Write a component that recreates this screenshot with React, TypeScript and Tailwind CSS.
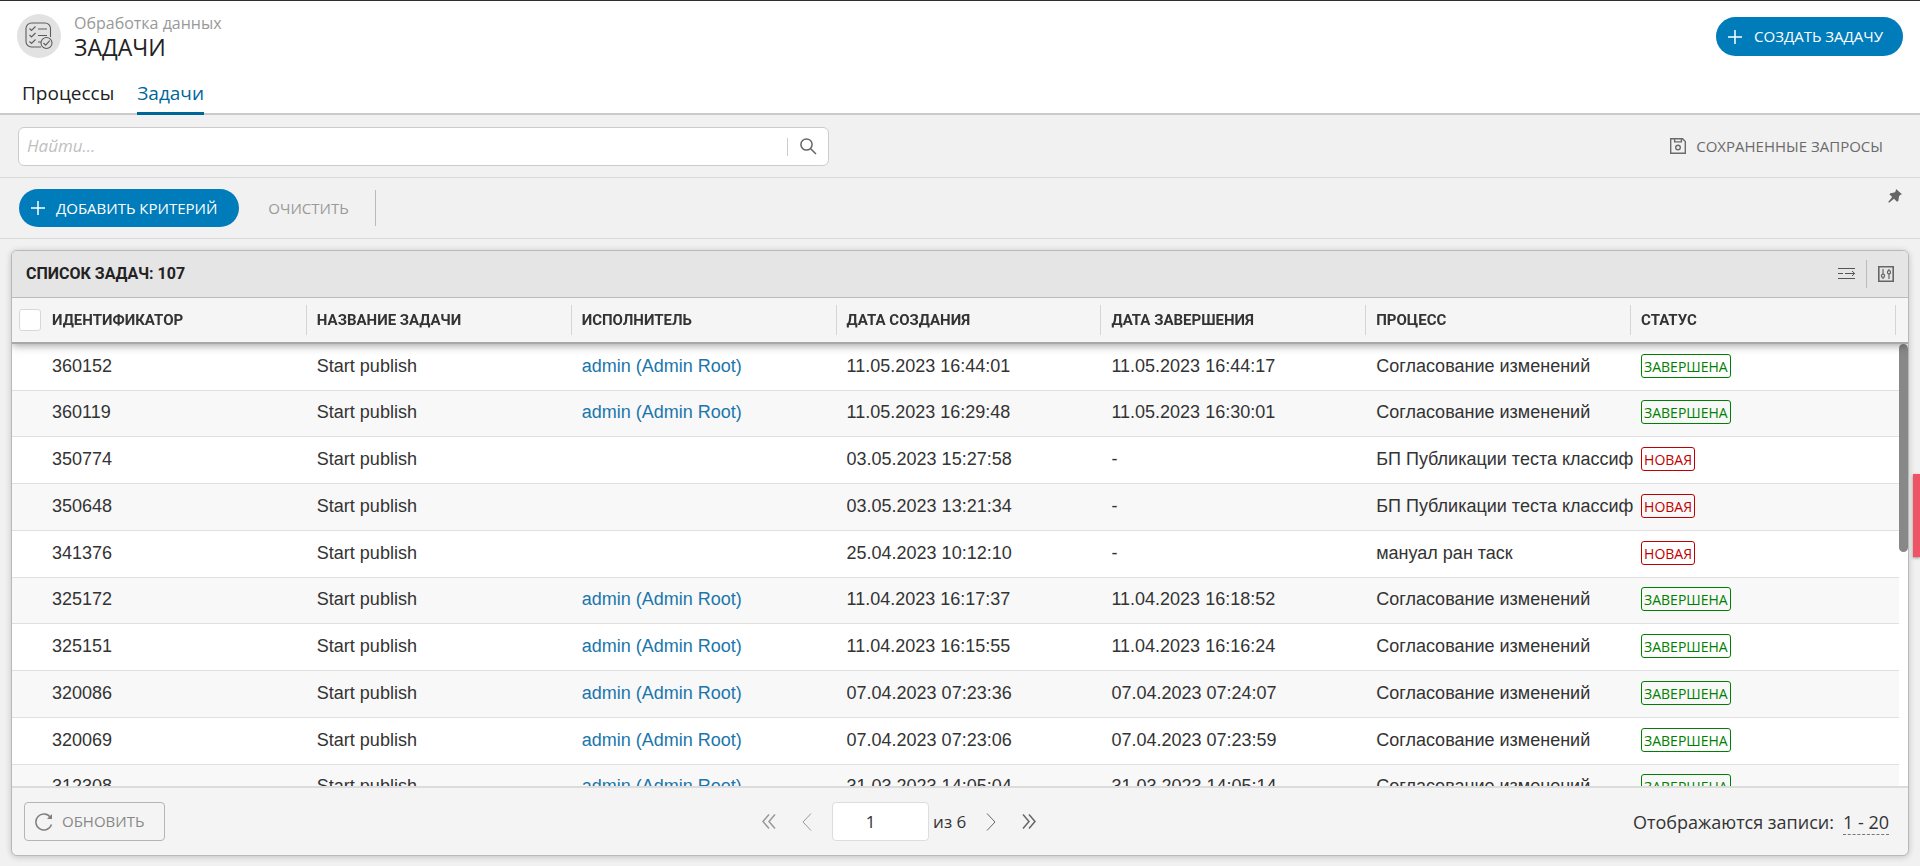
import React, { useState } from 'react';

interface Task {
  id: string;
  name: string;
  assignee?: string;
  created: string;
  finished?: string;
  process: string;
  status: 'done' | 'new';
}

const APPROVAL = 'Согласование изменений';
const PUBLISH = 'БП Публикации теста классификатора';
const ADMIN = 'admin (Admin Root)';

const tasks: Task[] = [
  { id: '360152', name: 'Start publish', assignee: ADMIN, created: '11.05.2023 16:44:01', finished: '11.05.2023 16:44:17', process: APPROVAL, status: 'done' },
  { id: '360119', name: 'Start publish', assignee: ADMIN, created: '11.05.2023 16:29:48', finished: '11.05.2023 16:30:01', process: APPROVAL, status: 'done' },
  { id: '350774', name: 'Start publish', created: '03.05.2023 15:27:58', process: PUBLISH, status: 'new' },
  { id: '350648', name: 'Start publish', created: '03.05.2023 13:21:34', process: PUBLISH, status: 'new' },
  { id: '341376', name: 'Start publish', created: '25.04.2023 10:12:10', process: 'мануал ран таск', status: 'new' },
  { id: '325172', name: 'Start publish', assignee: ADMIN, created: '11.04.2023 16:17:37', finished: '11.04.2023 16:18:52', process: APPROVAL, status: 'done' },
  { id: '325151', name: 'Start publish', assignee: ADMIN, created: '11.04.2023 16:15:55', finished: '11.04.2023 16:16:24', process: APPROVAL, status: 'done' },
  { id: '320086', name: 'Start publish', assignee: ADMIN, created: '07.04.2023 07:23:36', finished: '07.04.2023 07:24:07', process: APPROVAL, status: 'done' },
  { id: '320069', name: 'Start publish', assignee: ADMIN, created: '07.04.2023 07:23:06', finished: '07.04.2023 07:23:59', process: APPROVAL, status: 'done' },
  { id: '312308', name: 'Start publish', assignee: ADMIN, created: '31.03.2023 14:05:04', finished: '31.03.2023 14:05:14', process: APPROVAL, status: 'done' },
];

const columns = ['ИДЕНТИФИКАТОР', 'НАЗВАНИЕ ЗАДАЧИ', 'ИСПОЛНИТЕЛЬ', 'ДАТА СОЗДАНИЯ', 'ДАТА ЗАВЕРШЕНИЯ', 'ПРОЦЕСС', 'СТАТУС'];

const PlusIcon = () => (
  <svg width="14" height="14" viewBox="0 0 14 14" stroke="currentColor" strokeWidth="1.5" aria-hidden="true">
    <path d="M7 0v14M0 7h14" />
  </svg>
);

const TasksIcon = () => (
  <svg width="28" height="28" viewBox="0 0 28 28" fill="none" stroke="#5c5c5c" strokeWidth="1.1" aria-hidden="true">
    <path d="M16 25H6.500a5.500 5.500 0 0 1-5.500-5.500V6.500A5.500 5.500 0 0 1 6.500 1h13A5.500 5.500 0 0 1 25.500 6.500V15" />
    <path d="M4.500 6.500l2 2 4-4M4.500 13l2 2 4-4M4.500 19.500l2 2 4-4" />
    <path d="M13 7h9M13 13.500h9M13 20h3" />
    <circle cx="21.500" cy="21" r="5.500" fill="#e2e2e2" />
    <path d="M18.500 21l2.200 2.200 4-4.500" />
  </svg>
);

const SearchIcon = () => (
  <svg width="17" height="17" viewBox="0 0 17 17" fill="none" stroke="#666" strokeWidth="1.500" aria-hidden="true">
    <circle cx="6.500" cy="6.500" r="5.600" />
    <path d="M10.500 10.500l5.500 5.500" />
  </svg>
);

const DiskIcon = () => (
  <svg width="16" height="16" viewBox="0 0 16 16" fill="none" stroke="#6b6b6b" strokeWidth="1.400" aria-hidden="true">
    <path d="M.7.700h11.800l2.800 2.800v11.800H.7z" />
    <path d="M4.600.700v3.200h6.800V.7" />
    <circle cx="8" cy="9.500" r="2.300" />
  </svg>
);

const PinIcon = () => (
  <svg width="14" height="14" viewBox="0 0 14 14" fill="#666" aria-hidden="true">
    <path d="M8 0l6 5.300-2 .7-1 1.500-.7 4.500-1.300.800-3-3L1 13.800l-.8-.700L4.200 8 1.500 5.500l.8-1.300L6.500 3.500 7.800 2z" />
  </svg>
);

const WrapIcon = () => (
  <svg width="18" height="12" viewBox="0 0 18 12" fill="none" stroke="#555" strokeWidth="1" aria-hidden="true">
    <path d="M0 .5h17M0 10.500h17M0 5.500h5M7 5.500h9.500M14 3l2.700 2.500L14 8" />
  </svg>
);

const SettingsIcon = () => (
  <svg width="16" height="16" viewBox="0 0 16 16" fill="none" stroke="#666" strokeWidth="1.200" aria-hidden="true">
    <path d="M.8.800h14.400v14.400H.8z" strokeWidth="1.600" />
    <path d="M5 3v5M5 11.500V13M11 3v1.500M11 8v5" />
    <circle cx="5" cy="9.800" r="1.600" />
    <circle cx="11" cy="6.200" r="1.600" />
  </svg>
);

const RefreshIcon = () => (
  <svg width="18" height="18" viewBox="0 0 18 18" fill="none" stroke="#808080" strokeWidth="1.500" aria-hidden="true">
    <path d="M16.500 11.500A8 8 0 1 1 15.500 4.500" />
    <path d="M17 1v5h-5z" fill="#808080" stroke="none" />
  </svg>
);

const StatusBadge: React.FC<{ status: Task['status'] }> = ({ status }) => (
  <span
    className={`h-6 rounded-[3px] border px-[2px] font-['Open_Sans',sans-serif] text-sm leading-[23px] ${
      status === 'done' ? 'border-[#008000] text-[#008000]' : 'border-[#c00000] text-[#c00000]'
    }`}
  >
    {status === 'done' ? 'ЗАВЕРШЕНА' : 'НОВАЯ'}
  </span>
);

const Cell: React.FC<{ children?: React.ReactNode }> = ({ children }) => (
  <td className="border-b border-[#e0e0e0] py-0 pl-[10px]">
    <div className="-mr-[3px] overflow-hidden pb-[3px] whitespace-nowrap">{children}</div>
  </td>
);

const PageHeader = () => (
  <header className="border-t border-[#2d2d33] bg-white">
    <div className="flex items-start justify-between px-[17px] pt-[10px]">
      <div className="flex items-center gap-[13px]">
        <div className="flex h-11 w-11 items-center justify-center rounded-full bg-[#e2e2e2]">
          <TasksIcon />
        </div>
        <div className="pt-[2px]">
          <p className="text-base leading-5 text-[#999]">Обработка данных</p>
          <h1 className="text-[23px] leading-7 text-[#222]">ЗАДАЧИ</h1>
        </div>
      </div>
      <button
        type="button"
        className="mt-[6px] flex h-[39px] items-center gap-3 rounded-full bg-[#007cba] pr-5 pl-3 text-[15px] text-white"
      >
        <PlusIcon />
        СОЗДАТЬ ЗАДАЧУ
      </button>
    </div>
    <nav className="flex gap-[23px] border-b-2 border-[#c9cbcb] px-[22px] text-[19px]">
      <a href="#processes" className="-mb-[2px] h-[54px] border-b-[3px] border-transparent pt-4 leading-8 text-[#222]">Процессы</a>
      <a href="#tasks" className="-mb-[2px] h-[54px] border-b-[3px] border-[#006699] pt-4 leading-8 text-[#006699]">Задачи</a>
    </nav>
  </header>
);

const SearchBar = () => {
  const [query, setQuery] = useState('');

  return (
    <div className="flex items-center justify-between border-b border-[#d8d8d8] pt-3 pr-[37px] pb-[11px] pl-[18px]">
      <div className="flex h-[39px] w-[811px] items-center rounded-md border border-[#ccc] bg-white">
        <input
          type="text"
          aria-label="Поиск"
          placeholder="Найти..."
          className="h-full flex-1 bg-transparent px-2 pb-[2px] text-[17px] outline-none placeholder:text-[#c0c0c0] placeholder:italic"
          value={query}
          onChange={(e) => setQuery(e.target.value)}
        />
        <button type="button" aria-label="Найти" className="flex h-[18px] items-center border-l border-[#ccc] pr-[11px] pl-3">
          <SearchIcon />
        </button>
      </div>
      <button type="button" className="flex items-center gap-[10px] pb-px text-[15px] text-[#6b6b6b]">
        <DiskIcon />
        СОХРАНЕННЫЕ ЗАПРОСЫ
      </button>
    </div>
  );
};

const CriteriaBar = () => (
  <div className="flex items-start justify-between border-b border-[#d8d8d8] px-[19px] pt-[11px] pb-[11px]">
    <div className="flex items-center">
      <button type="button" className="flex h-[38px] items-center gap-[11px] rounded-full bg-[#007cba] pr-[22px] pl-3 text-[15px] text-white">
        <PlusIcon />
        ДОБАВИТЬ КРИТЕРИЙ
      </button>
      <button type="button" className="ml-[29px] text-[15px] text-[#999]">ОЧИСТИТЬ</button>
      <span className="ml-[26px] h-9 border-l border-[#bbb]" />
    </div>
    <button type="button" aria-label="Закрепить" className="-mr-px">
      <PinIcon />
    </button>
  </div>
);

const TaskTable = () => (
  <div className="relative min-h-0 flex-1">
    <div className="h-full overflow-y-auto bg-white [scrollbar-width:none]">
      <table className="w-full table-fixed border-separate border-spacing-0 text-left">
        <colgroup>
          <col className="w-[30px]" />
          {columns.map((title) => (
            <col key={title} />
          ))}
          <col className="w-3" />
        </colgroup>
        <thead className="sticky top-0 z-10 bg-[#f5f5f5] shadow-[0_2px_8px_rgba(0,0,0,0.35)]">
          <tr className="h-[46px]">
            <th className="border-b-2 border-[#a8a8a8] p-0 pl-[7px]">
              <input
                type="checkbox"
                aria-label="Выбрать все"
                className="block h-[22px] w-[22px] appearance-none rounded-[3px] border border-[#d8d8d8] bg-white"
              />
            </th>
            {columns.map((title) => (
              <th key={title} className="border-b-2 border-[#a8a8a8] p-0">
                <div className="h-[30px] border-r border-[#d5d5d5] pl-[10px] font-['Roboto',sans-serif] text-[15px] leading-[31px] font-bold text-[#333]">
                  {title}
                </div>
              </th>
            ))}
            <th className="border-b-2 border-[#a8a8a8] p-0" />
          </tr>
        </thead>
        <tbody className="font-['Liberation_Sans',sans-serif] text-lg text-[#333]">
          {tasks.map((task) => (
            <tr key={task.id} className="h-[47px] bg-white even:bg-[#f8f8f8] nth-[4n+2]:h-[46px]">
              <td className="border-b border-[#e0e0e0] p-0" />
              <Cell>{task.id}</Cell>
              <Cell>{task.name}</Cell>
              <Cell>
                {task.assignee && <a href="#user" className="text-[#1a76ab]">{task.assignee}</a>}
              </Cell>
              <Cell>{task.created}</Cell>
              <Cell>{task.finished ?? '-'}</Cell>
              <Cell>{task.process}</Cell>
              <td className="border-b border-[#e0e0e0] p-0 pl-[10px]">
                <div className="flex pb-[3px]">
                  <StatusBadge status={task.status} />
                </div>
              </td>
              <td className="border-b border-[#e0e0e0] p-0" />
            </tr>
          ))}
        </tbody>
      </table>
    </div>
    {/* scrollbar */}
    <div className="absolute top-[46px] right-0 bottom-0 w-[9px] bg-white">
      <div className="h-[208px] rounded-full bg-[#888]" />
    </div>
  </div>
);

const Pager = () => {
  const [page, setPage] = useState('1');

  return (
    <div className="flex items-center text-[17px] text-[#333]">
      <button type="button" aria-label="Первая страница" className="text-[#999]">
        <svg width="14" height="15" viewBox="0 0 14 15" fill="none" stroke="currentColor" strokeWidth="1.500">
          <path d="M7 .5l-6 7 6 7M13 .5l-6 7 6 7" />
        </svg>
      </button>
      <button type="button" aria-label="Предыдущая страница" className="ml-[26px] text-[#999]">
        <svg width="10" height="18" viewBox="0 0 10 18" fill="none" stroke="currentColor" strokeWidth="1">
          <path d="M9 .5L1 9l8 8.500" />
        </svg>
      </button>
      <input
        type="text"
        aria-label="Страница"
        className="mr-1 ml-5 h-[39px] w-[97px] rounded border border-[#ddd] bg-white pr-5 text-center outline-none"
        value={page}
        onChange={(e) => setPage(e.target.value)}
      />
      <span className="text-[17px]">из 6</span>
      <button type="button" aria-label="Следующая страница" className="ml-5 text-[#666]">
        <svg width="10" height="18" viewBox="0 0 10 18" fill="none" stroke="currentColor" strokeWidth="1">
          <path d="M1 .5L9 9l-8 8.500" />
        </svg>
      </button>
      <button type="button" aria-label="Последняя страница" className="ml-[26px] text-[#666]">
        <svg width="14" height="15" viewBox="0 0 14 15" fill="none" stroke="currentColor" strokeWidth="1.500">
          <path d="M1 .5l6 7-6 7M7 .5l6 7-6 7" />
        </svg>
      </button>
    </div>
  );
};

const App = () => (
  <div className="flex h-screen flex-col bg-[#f1f1f1] font-['Open_Sans','Noto_Sans',sans-serif]">
    <PageHeader />
    <SearchBar />
    <CriteriaBar />

    <main className="mx-[11px] mt-[11px] mb-[10px] flex min-h-0 flex-1 flex-col overflow-hidden rounded-md border border-[#b9b9b9] bg-[#f4f4f4] shadow-[0_1px_6px_rgba(0,0,0,0.2)]">
      <div className="flex h-[47px] shrink-0 items-center justify-between border-b border-[#bbb] bg-[#e5e5e5] px-[14px]">
        <h2 className="font-['Roboto',sans-serif] text-base font-bold text-[#222]">СПИСОК ЗАДАЧ: 107</h2>
        <div className="flex items-center">
          <button type="button" aria-label="Перенос строк">
            <WrapIcon />
          </button>
          <span className="mr-[11px] ml-[10px] h-7 border-l border-[#bbb]" />
          <button type="button" aria-label="Настройка колонок">
            <SettingsIcon />
          </button>
        </div>
      </div>

      <TaskTable />

      <footer className="flex shrink-0 items-center justify-between border-t-2 border-[#dcdcdc] py-[14px] pr-[19px] pl-3">
        <button
          type="button"
          className="flex h-[39px] items-center gap-[9px] rounded border border-[#b5b5b5] pr-5 pl-[10px] text-[15px] text-[#888]"
        >
          <RefreshIcon />
          ОБНОВИТЬ
        </button>
        <Pager />
        <p className="text-lg text-[#333]">
          Отображаются записи:
          <button type="button" className="ml-[9px] border-b border-dashed border-[#777] leading-6">1 - 20</button>
        </p>
      </footer>
    </main>

    <button
      type="button"
      aria-label="Обратная связь"
      className="fixed top-[474px] right-0 h-[83px] w-[7px] bg-[#ef5366] shadow-[0_1px_3px_rgba(0,0,0,0.4)]"
    />
  </div>
);

export default App;
